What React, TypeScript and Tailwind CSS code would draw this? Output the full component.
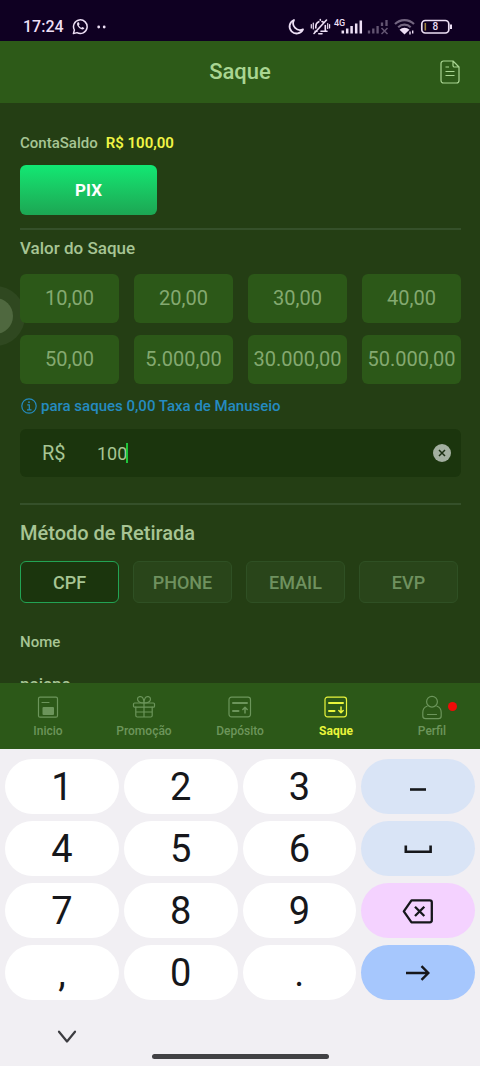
import type { ReactNode } from "react";

const amounts = ["10,00", "20,00", "30,00", "40,00", "50,00", "5.000,00", "30.000,00", "50.000,00"];
const methods = ["CPF", "PHONE", "EMAIL", "EVP"];

function StatusBar() {
  return (
    <div className="flex h-[41px] shrink-0 items-center justify-between bg-[#0f0022] pr-[27px] pl-[23px] pt-3 text-[#eddff5]">
      <div className="flex items-center gap-2">
        <span className="text-[16px] font-medium leading-5">17:24</span>
        <svg width="17" height="17" viewBox="0 0 17 17" fill="none" stroke="currentColor" strokeWidth="1.5">
          <path d="M1.4 15.6l1-3.6a6.8 6.8 0 1 1 2.6 2.6z" strokeLinejoin="round" />
          <path d="M5.8 4.3c-1.300.9-1.100 3 .8 5s4.100 3 5.500 1.500l.2-.9-1.900-1-1 .9c-1.100-.4-2.200-1.500-2.600-2.600l.8-.9-.8-2z" fill="currentColor" stroke="none" />
        </svg>
        <svg width="10" height="4" viewBox="0 0 10 4" fill="currentColor">
          <circle cx="1.700" cy="2" r="1.400" />
          <circle cx="7.200" cy="2" r="1.400" />
        </svg>
      </div>
      <svg width="166" height="20" viewBox="286 17 166 20" fill="none" stroke="currentColor">
        <path d="M293 20a7 7 0 1 0 9 9.300a6.800 6.800 0 0 1-9-9.300z" strokeWidth="1.800" strokeLinejoin="round" />
        <g strokeWidth="1.600" strokeLinecap="round">
          <path d="M314 31.300h2M320 31.300h6M314.800 28v-1.500a5 5 0 0 1 3-4.800M319.300 20.300v-.8M321 21.500l1.500.7M324.300 25.500v5.500M317.800 33.800h3.200M313 33.500l12.500-13.500" />
          <path d="M310.300 24.500v3.500M312.300 23v6M328.600 24.500v3.500M326.700 23.500v5" strokeWidth="1.200" />
        </g>
        <text x="333" y="26" fill="currentColor" stroke="none" fontFamily="Roboto, sans-serif" fontSize="9" fontWeight="500">4G</text>
        <g strokeWidth="2.500">
          <path d="M341.800 33.500v-3M346.200 33.500v-5M350.600 33.500v-7.500M355.200 33.500v-10M359.800 33.500v-13" />
        </g>
        <g strokeWidth="2.300" opacity=".38">
          <path d="M368 33.500v-3M372.300 33.500v-5M376.600 33.500v-7.500M381 26v-3.500M385.500 26v-6" />
          <path d="M380.500 28l6 6M386.500 28l-6 6" strokeWidth="1.500" />
        </g>
        <g strokeWidth="2.200">
          <path d="M394 24a13.500 13.500 0 0 1 19 0M397.200 27.200a9 9 0 0 1 12.500 0" opacity=".45" />
          <path d="M398.500 29.800a7.300 7.300 0 0 1 10 0l-5 4.700z" fill="currentColor" stroke="none" />
          <path d="M409 34.500v-3M411.700 30.500v3" strokeWidth="1.400" />
        </g>
        <rect x="420.800" y="20.500" width="27" height="12.500" rx="3.500" strokeWidth="1.700" />
        <path d="M450 24.500v4.500" strokeWidth="2" />
        <path d="M424.300 23v7.500" stroke="#a38540" strokeWidth="1.600" />
        <text x="434.300" y="30.300" textAnchor="middle" fill="currentColor" stroke="none" fontFamily="Roboto, sans-serif" fontSize="10" fontWeight="500">8</text>
      </svg>
    </div>
  );
}

function NavIcon({ children }: { children: ReactNode }) {
  return (
    <svg width="26" height="26" viewBox="0 0 26 26" fill="none" stroke="currentColor" strokeWidth="1.200" strokeLinecap="round" strokeLinejoin="round">
      {children}
    </svg>
  );
}

const card = (
  <>
    <rect x="2" y="3.200" width="21.500" height="19.600" rx="2.500" />
    <path d="M6 9h14M6 17h5.500" strokeWidth="2" />
  </>
);

const tabs = [
  {
    label: "Inicio",
    icon: (
      <>
        <rect x="3.500" y="3.200" width="19" height="20" rx="1.500" />
        <path d="M7 8.500h7" />
        <rect x="7.500" y="13" width="11.500" height="8" rx="1" fill="currentColor" stroke="none" />
      </>
    ),
  },
  {
    label: "Promoção",
    icon: (
      <>
        <rect x="2.500" y="9" width="21" height="4.200" rx="1" />
        <path d="M4.800 13.200v8.300a1.500 1.500 0 0 0 1.500 1.500h13.400a1.500 1.500 0 0 0 1.500-1.500v-8.300M13 9v14M4.800 18h16.400" />
        <path d="M13 9c-4 0-6.500-1.500-6.500-4s4-3.500 5.500-.8c.6 1 1 2.800 1 4.800zM13 9c4 0 6.500-1.500 6.500-4s-4-3.500-5.500-.8c-.6 1-1 2.800-1 4.800z" />
      </>
    ),
  },
  {
    label: "Depósito",
    icon: (
      <>
        {card}
        <path d="M18 19v-5.500M15.800 15.500L18 13.300l2.200 2.200" strokeWidth="1.500" />
      </>
    ),
  },
  {
    label: "Saque",
    icon: (
      <>
        {card}
        <path d="M18 13v5.500M15.800 16.500L18 18.700l2.200-2.200" strokeWidth="1.500" />
      </>
    ),
  },
  {
    label: "Perfil",
    icon: (
      <>
        <circle cx="13" cy="7.700" r="5.400" />
        <path d="M8 12.200c-2.700.9-4.200 3.300-4.200 6.300v3.500a2.700 2.700 0 0 0 2.700 2.700h13a2.700 2.700 0 0 0 2.700-2.700v-3.500c0-3-1.500-5.400-4.200-6.300M8.500 20.500h9" />
      </>
    ),
  },
];

function Keyboard() {
  const key = "flex h-[55px] items-center justify-center rounded-full pt-px text-[38px] leading-none";
  const white = key + " bg-white";
  return (
    <section aria-label="Teclado" className="shrink-0 bg-[#f1eff3] px-[5px] pt-[10px] pb-[7px] text-[#16171b]">
      <div className="grid grid-cols-4 gap-x-[5px] gap-y-[7px]">
        {["1", "2", "3"].map((k) => <button key={k} className={white}>{k}</button>)}
        <button aria-label="Hífen" className={key + " bg-[#d9e4f6]"}>
          <svg width="32" height="32" viewBox="0 0 32 32" stroke="currentColor" strokeWidth="2.600"><path d="M8 18.500h16" /></svg>
        </button>
        {["4", "5", "6"].map((k) => <button key={k} className={white}>{k}</button>)}
        <button aria-label="Espaço" className={key + " bg-[#d9e4f6]"}>
          <svg width="32" height="32" viewBox="0 0 32 32" fill="none" stroke="currentColor" strokeWidth="2.600"><path d="M3.800 12.500v6.300h24.800v-6.300" /></svg>
        </button>
        {["7", "8", "9"].map((k) => <button key={k} className={white}>{k}</button>)}
        <button aria-label="Apagar" className={key + " bg-[#f4d2ff]"}>
          <svg width="32" height="32" viewBox="0 0 32 32" fill="none" stroke="currentColor" strokeWidth="2.300" strokeLinejoin="round"><path d="M9.500 5.300h18.300a2 2 0 0 1 2 2v18a2 2 0 0 1-2 2H9.500L1.800 16.300zM13 11.700l9.300 9.300M22.300 11.700l-9.300 9.300" /></svg>
        </button>
        {[",", "0", "."].map((k) => <button key={k} className={white}>{k}</button>)}
        <button aria-label="Avançar" className={key + " bg-[#a6c7fd]"}>
          <svg width="32" height="32" viewBox="0 0 32 32" fill="none" stroke="currentColor" strokeWidth="2.400"><path d="M4 16h22M19.500 9.200l6.800 6.800-6.800 6.800" /></svg>
        </button>
      </div>
      <div className="flex h-[54px] items-end pb-px pl-[52px]">
        <button aria-label="Ocultar teclado" className="flex h-8 w-5 items-center justify-center">
          <svg width="20" height="14" viewBox="0 0 20 14" fill="none" stroke="#3c3c40" strokeWidth="2.200" strokeLinecap="round" strokeLinejoin="round"><path d="M2 1.700l8 9.800 8-9.800" /></svg>
        </button>
      </div>
      <div className="mx-auto h-[5px] w-[177px] rounded-full bg-[#414144]" />
    </section>
  );
}

export default function App() {
  return (
    <div className="flex h-screen flex-col overflow-hidden bg-[#243e14] font-['Roboto',sans-serif]">
      <StatusBar />
      <header className="grid h-[62px] shrink-0 grid-cols-[1fr_auto_1fr] items-center bg-[#2d5a18] px-5 text-[#a9d592]">
        <h1 className="col-start-2 text-[22px] font-medium leading-7">Saque</h1>
        <button aria-label="Registros" className="justify-self-end">
          <svg width="20" height="24" viewBox="0 0 20 24" fill="none" stroke="currentColor" strokeWidth="1.200" strokeLinejoin="round">
            <path d="M13 1H3.500A2.500 2.500 0 0 0 1 3.500v17A2.500 2.500 0 0 0 3.500 23h13a2.500 2.500 0 0 0 2.500-2.500V7zM13 1v4.500A1.500 1.500 0 0 0 14.500 7H19M5.500 7H9M5.500 11.500h9M5.500 15.500h9" />
          </svg>
        </button>
      </header>

      <main className="relative min-h-0 flex-1 overflow-hidden pt-[30px] pr-[19px] pl-5 text-[#a7c594]">
        <div aria-hidden="true" className="absolute top-[183px] -left-[35px] flex size-[60px] items-center justify-center rounded-full bg-white/5">
          <div className="size-[36px] rounded-full bg-[#4f683f]" />
        </div>
        <p className="flex gap-2 text-[15px] font-medium leading-5">
          <span>ContaSaldo</span>
          <span className="font-semibold text-[#f0f545]">R$ 100,00</span>
        </p>
        <button className="mt-3 h-[50px] w-[137px] rounded-md bg-linear-to-b from-[#11e873] to-[#1ca653] pt-px text-[17px] font-bold text-white">PIX</button>
        <hr className="mt-[13px] border-t-2 border-[#35502a]" />
        <h2 className="mt-[6px] text-[17px] font-medium leading-6">Valor do Saque</h2>
        <div className="mt-[14px] grid grid-cols-4 gap-x-[15px] gap-y-3">
          {amounts.map((a) => (
            <button key={a} className="relative flex h-[49px] items-center justify-center rounded-md bg-[#2c5818] pb-px text-[20px] font-normal text-[#84a970]">{a}</button>
          ))}
        </div>
        <p className="mt-3 flex items-center gap-1 pl-px text-[15px] font-medium leading-5 text-[#258bc0]">
          <svg width="16" height="16" viewBox="0 0 16 16" fill="none" stroke="currentColor" strokeWidth="1.200">
            <circle cx="8" cy="8" r="7.200" />
            <path d="M6.300 6.800h2v5M6 11.900h4.500" />
            <circle cx="8" cy="4.200" r=".9" fill="currentColor" stroke="none" />
          </svg>
          <span>para saques 0,00 Taxa de Manuseio</span>
        </p>
        <div className="mt-[13px] flex h-12 items-center rounded-md bg-[#1b350d] pr-[10px] pl-[22px]">
          <label htmlFor="amount" className="w-[55px] text-[20px] font-normal">R$</label>
          <div className="relative flex flex-1 items-center">
            <input id="amount" inputMode="decimal" defaultValue="100" className="w-full bg-transparent text-[18px] font-normal outline-none" />
            <span aria-hidden="true" className="absolute left-[29px] h-5 w-[2px] bg-[#1fc43c]" />
          </div>
          <button aria-label="Limpar" className="flex size-[18px] items-center justify-center rounded-full bg-[#a3afa0]">
            <svg width="8" height="8" viewBox="0 0 8 8" stroke="#1b2e12" strokeWidth="1.500"><path d="M1 1l6 6M7 1L1 7" /></svg>
          </button>
        </div>
        <hr className="mt-[26px] border-t-2 border-[#35502a]" />
        <h2 className="mt-4 text-[20px] font-medium leading-6">Método de Retirada</h2>
        <div className="mt-4 grid grid-cols-4 gap-[14px] pr-[3px]">
          {methods.map((m, i) => (
            <button
              key={m}
              aria-pressed={i === 0}
              className={
                i === 0
                  ? "h-[42px] rounded-md border border-[#22a354] bg-[#1b350d] text-[18px] font-medium text-[#a7c594]"
                  : "h-[42px] rounded-md border border-[#2f5024] bg-[#29451a] text-[18px] font-medium text-[#6f915f]"
              }
            >
              {m}
            </button>
          ))}
        </div>
        <p className="mt-[29px] text-[15px] font-medium leading-5">Nome</p>
        <p className="mt-5 text-[17px] font-medium leading-6">naiane</p>
      </main>

      <nav className="grid h-[66px] shrink-0 grid-cols-5 bg-[#2c5818]">
        {tabs.map(({ label, icon }) => (
          <a
            key={label}
            href="#"
            className={
              label === "Saque"
                ? "flex flex-col items-center pt-[11px] text-[12px] font-bold leading-[22px] text-[#e9f53c]"
                : "flex flex-col items-center pt-[11px] text-[12px] font-medium leading-[22px] text-[#6c955b]"
            }
          >
            <span className="relative">
              <NavIcon>{icon}</NavIcon>
              {label === "Perfil" && <span className="absolute top-2 left-[29px] size-[9px] rounded-full bg-[#f00c08]" />}
            </span>
            {label}
          </a>
        ))}
      </nav>
      <Keyboard />
    </div>
  );
}
